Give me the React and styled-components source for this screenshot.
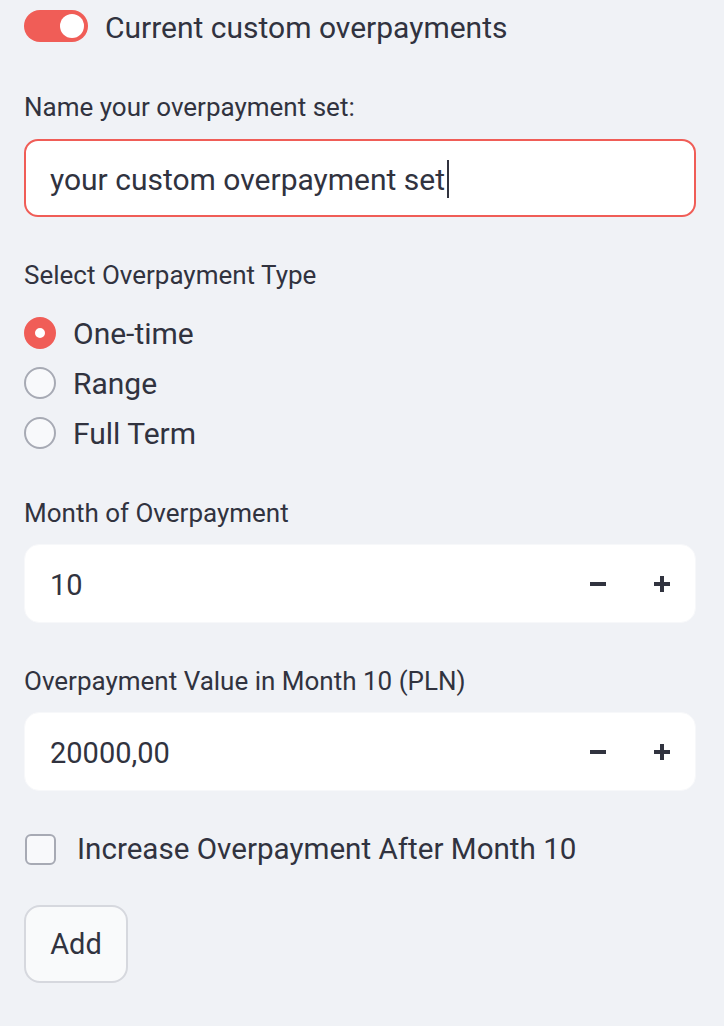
import React from 'react'
import styled, { createGlobalStyle } from 'styled-components'

const GlobalStyle = createGlobalStyle`
  html, body {
    margin: 0;
    padding: 0;
    background: #f0f2f6;
  }
  body {
    font-family: Roboto, "Liberation Sans", sans-serif;
    color: #31333f;
  }
`

const Sidebar = styled.div`
  width: 672px;
  padding: 10px 28px 40px 24px;
  display: flex;
  flex-direction: column;
`

const ToggleRow = styled.div`
  display: flex;
  align-items: center;
  gap: 17px;
  height: 32px;
`

const Track = styled.div`
  width: 64px;
  height: 32px;
  border-radius: 16px;
  background: #f05d57;
  display: flex;
  align-items: center;
  justify-content: ${p => (p.on ? 'flex-end' : 'flex-start')};
  padding: 0 4px;
  box-sizing: border-box;
`

const Knob = styled.div`
  width: 24px;
  height: 24px;
  border-radius: 50%;
  background: #fff;
`

const ToggleLabel = styled.span`
  font-size: 30px;
  line-height: 32px;
  padding-top: 3px;
`

const Label = styled.div`
  font-size: 26px;
  line-height: 36px;
  margin-top: ${p => p.top}px;
`

const TextBox = styled.div`
  margin-top: 14px;
  height: 78px;
  box-sizing: border-box;
  border: 2px solid #f05d57;
  border-radius: 14px;
  background: #fff;
  display: flex;
  align-items: center;
  padding: 2px 0 0 24px;
  font-size: 30px;
`

const Caret = styled.span`
  display: inline-block;
  width: 2px;
  height: 38px;
  margin-left: 2px;
  background: #31333f;
`

const RadioGroup = styled.div`
  margin-top: 15px;
  display: flex;
  flex-direction: column;
`

const RadioRow = styled.div`
  height: 50px;
  display: flex;
  align-items: center;
  gap: 17px;
  font-size: 30px;
`

const RadioDot = styled.div`
  width: 32px;
  height: 32px;
  box-sizing: border-box;
  border-radius: 50%;
  background: ${p => (p.checked ? '#fff' : '#f8f9fb')};
  border: ${p => (p.checked ? '11px solid #f05d57' : '2px solid #a7aab4')};
`

const NumberBox = styled.div`
  margin-top: 13px;
  height: 79px;
  box-sizing: border-box;
  border-radius: 15px;
  background: #fff;
  border: 1px solid #f7f8fa;
  display: flex;
  align-items: center;
  padding: 0 1px 0 25px;
`

const NumberValue = styled.span`
  flex: 1;
  font-size: 29px;
  padding-top: 3px;
`

const StepButton = styled.div`
  width: 64px;
  height: 100%;
  display: flex;
  align-items: center;
  justify-content: center;
`

const CheckRow = styled.div`
  margin-top: 40px;
  height: 36px;
  display: flex;
  align-items: center;
  gap: 21px;
  font-size: 29.6px;
`

const CheckBox = styled.div`
  width: 31px;
  height: 31px;
  margin-left: 1px;
  box-sizing: border-box;
  border: 2px solid #a7aab4;
  border-radius: 6px;
  background: #f8f9fb;
`

const AddButton = styled.button`
  margin-top: 38px;
  align-self: flex-start;
  width: 104px;
  height: 78px;
  box-sizing: border-box;
  border: 2px solid #d6d8de;
  border-radius: 16px;
  background: #f9fafb;
  font-family: Roboto, "Liberation Sans", sans-serif;
  font-size: 29px;
  color: #31333f;
  padding: 0;
`

const MinusIcon = () => (
  <svg width="16" height="16" viewBox="0 0 16 16">
    <rect x="0" y="6" width="16" height="4" fill="#31333f" />
  </svg>
)

const PlusIcon = () => (
  <svg width="16" height="16" viewBox="0 0 16 16">
    <rect x="0" y="6" width="16" height="4" fill="#31333f" />
    <rect x="6" y="0" width="4" height="16" fill="#31333f" />
  </svg>
)

function NumberInput({ value }) {
  return (
    <NumberBox>
      <NumberValue>{value}</NumberValue>
      <StepButton><MinusIcon /></StepButton>
      <StepButton><PlusIcon /></StepButton>
    </NumberBox>
  )
}

const types = ['One-time', 'Range', 'Full Term']

export default function App() {
  return (
    <>
      <GlobalStyle />
      <Sidebar>
        <ToggleRow>
          <Track on>
            <Knob />
          </Track>
          <ToggleLabel>Current custom overpayments</ToggleLabel>
        </ToggleRow>

        <Label top={47}>Name your overpayment set:</Label>
        <TextBox>
          your custom overpayment set<Caret />
        </TextBox>

        <Label top={40}>Select Overpayment Type</Label>
        <RadioGroup>
          {types.map((t, i) => (
            <RadioRow key={t}>
              <RadioDot checked={i === 0} />
              {t}
            </RadioRow>
          ))}
        </RadioGroup>

        <Label top={37}>Month of Overpayment</Label>
        <NumberInput value="10" />

        <Label top={40}>Overpayment Value in Month 10 (PLN)</Label>
        <NumberInput value="20000,00" />

        <CheckRow>
          <CheckBox />
          Increase Overpayment After Month 10
        </CheckRow>

        <AddButton>Add</AddButton>
      </Sidebar>
    </>
  )
}
